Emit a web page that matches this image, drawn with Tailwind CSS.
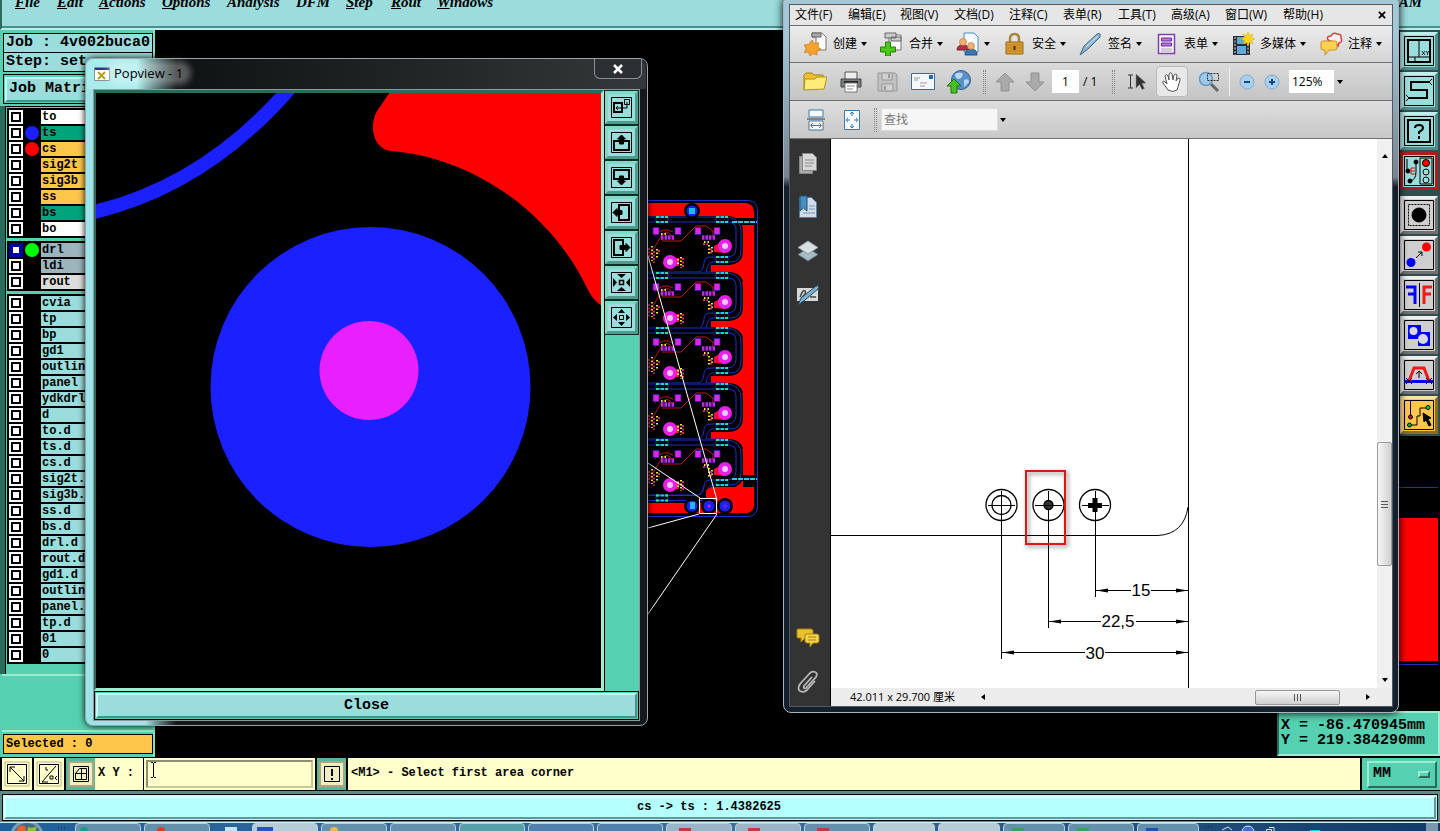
<!DOCTYPE html>
<html lang="zh">
<head>
    <meta charset="utf-8">
    <meta name="viewport" content="width=device-width, initial-scale=1" />
    <title>Graphic Editor</title>
    <script src="https://cdn.jsdelivr.net/npm/@tailwindcss/browser@4"></script>
</head>

<body class="bg-black font-['Liberation_Mono','Noto_Sans_CJK_SC',monospace] text-black">
<div class="relative min-h-screen flex flex-col overflow-hidden">

    <!-- menu bar -->
    <header class="h-[30px] shrink-0 bg-[#9bdcdc] border-l-2 border-l-[#2b6b5c] border-b-2 border-b-[#b5f0ec] shadow-[inset_0_-2px_0_#4f8c8c]">
        <nav class="-mt-[7px] flex items-start pl-[13px] pr-[18px] font-['Liberation_Serif',serif] font-bold italic text-[15px] leading-[18px]">
            <a href="#" class="w-[42px]"><u>F</u>ile</a>
            <a href="#" class="w-[42px]"><u>E</u>dit</a>
            <a href="#" class="w-[63px]"><u>A</u>ctions</a>
            <a href="#" class="w-[65px]"><u>O</u>ptions</a>
            <a href="#" class="w-[69px]">Analysis</a>
            <a href="#" class="w-[50px]">DFM</a>
            <a href="#" class="w-[45px]"><u>S</u>tep</a>
            <a href="#" class="w-[46px]"><u>R</u>out</a>
            <a href="#"><u>W</u>indows</a>
            <span class="ml-auto">AM</span>
        </nav>
    </header>

    <main class="flex-1 flex">
        <!-- layer list -->
        <aside class="w-[155px] shrink-0 flex flex-col bg-[#55d0b0] pl-[2px] font-bold border-r-2 border-r-[#7fe0c8]">
            <div class="pt-[3px] pl-px text-[15px] leading-[18px]">
                <div class="border border-black bg-[#9bdcdc] pl-[2px] h-5">Job : 4v002buca0</div>
                <div class="-mt-px border border-black bg-[#9bdcdc] pl-[2px] h-5">Step: set</div>
            </div>
            <div class="mt-[2px] ml-px border border-black p-px">
                <button class="w-full h-[25px] text-left pl-[2px] text-[15px] leading-5 bg-[#9bdcdc] border-2 border-t-[#c8f6f4] border-l-[#c8f6f4] border-b-[#4f8c8c] border-r-[#4f8c8c]">Job Matrix</button>
            </div>
            <div id="layers" class="mt-[2px] -ml-[2px] pl-[5px] bg-[#2b6b5c] text-[12px] leading-[14px]"></div>
            <div class="flex-1 min-h-[56px] border-t-2 border-t-[#9ceccf]"></div>
            <div class="border-t-2 border-t-[#9ceccf] pt-[2px] pb-[3px] pl-px">
                <div class="h-5 border border-black bg-[#ffc64c] pl-[2px] leading-[18px] text-[12px]">Selected : 0</div>
            </div>
        </aside>

        <!-- board canvas -->
        <section class="relative flex-1 bg-black flex flex-col items-end justify-between">
            <svg class="absolute top-0 right-0 w-[1285px] h-[727px]" viewBox="155 30 1285 727" fill="none">
                <defs>
                    <g id="pads">
                        <path d="M-6-2.500H6M-6 2.500H6" stroke="#28c8e8" stroke-width="2" stroke-dasharray="3.500 1" />
                        <path d="M-6-2V2M6-2V2" stroke="#1a30c8" />
                        <path d="M-6-2.500h2M4-2.500h2M-6 2.500h2M4 2.500h2" stroke="#28e878" stroke-width="2" />
                    </g>
                    <g id="cell">
                        <path d="M640 216H728Q743 217 743 232V250Q743 265 729 265H711V272H730Q743 274 743 282H640Z" fill="#000" />
                        <path d="M711 265H729Q738 265 743 257V281Q739 271 728 270H711Z" fill="#f00" />
                        <path d="M640 222H728Q736 222 736 230V248Q736 257 727 257H711Q704 257 704 263Q703 272 698 272H640" stroke="#1a30c8" />
                        <path d="M640 217H728Q741 219 741 231V250Q741 262 731 262H713Q708 262 706 272H727" stroke="#1a30c8" />
                        <path d="M650 255L660 238Q666 228 672 236M662 241H681L696 226H706L713 231V237M655 236Q663 226 673 232" stroke="#b81c10" />
                        <path d="M653 227.500h6v7h-6zM675 227.500h6v7h-6zM695 227.500h6v7h-6zM714 227.500h6v7h-6z" fill="#d828e8" stroke="#3018b8" stroke-width=".7" />
                        <path d="M661 237.500H674M702 237.500H715" stroke="#b828f0" stroke-width="4.500" stroke-dasharray="2.500 1" />
                        <path d="M725 240L714 246V252L725 253ZM670 258h9v8h-9z" fill="#e8103c" />
                        <path d="M709 245v10M712 247v6M681 257v11M678 259v7M652 246v15M657 249v10M704 242h6M661 234h7" stroke="#f0e828" stroke-width="2" stroke-dasharray="1.500 2" />
                        <path d="M711 248v6M683 258v9M649 248v14M654 251v12M659 250v4M703 244h5" stroke="#d02868" stroke-width="2" stroke-dasharray="2 1.500" />
                        <circle cx="670" cy="262" r="7" fill="#e820e8" /><circle cx="670" cy="262" r="3" fill="#f0c8ff" />
                        <circle cx="725" cy="246" r="7" fill="#e820e8" /><circle cx="725" cy="246" r="3" fill="#f0c8ff" />
                        <use href="#pads" x="662" y="219.500" /><use href="#pads" x="722" y="219.500" />
                        <use href="#pads" x="722" y="259.500" />
                    </g>
                </defs>
                <path d="M640 200.500H748Q757.500 201 757.500 211V507Q757 516 748 516.500H640" stroke="#1a30c8" />
                <path d="M640 203H746Q754 204 754 212V505Q753 513 745 513H640Z" fill="#f00" />
                <path d="M730 218H757V225H738ZM730 475H757V487H730Z" fill="#000" />
                <use href="#cell" />
                <use href="#cell" y="56" />
                <use href="#cell" y="111" />
                <use href="#cell" y="167" />
                <use href="#cell" y="223" />
                <path d="M640 495H700L711 487H754V505Q753 513 745 513H640Z" fill="#f00" />
                <path d="M640 495H700L706 490V503H640Z" fill="#000" />
                <path d="M640 495.500H697Q703 494 704 486M640 500.500H704" stroke="#1a30c8" />
                <use href="#pads" x="662" y="498" />
                <path d="M732 222H757M732 479H757" stroke="#28c8e8" stroke-width="2" stroke-dasharray="5 1" />
                <g fill="#000"><circle cx="692" cy="211" r="8" /><circle cx="692" cy="506" r="8" /><circle cx="709" cy="506" r="8" /><circle cx="725" cy="506" r="8" /></g>
                <g fill="#1a20f0"><circle cx="692" cy="211" r="5.500" /><circle cx="692" cy="506" r="5.500" /><circle cx="709" cy="506" r="5.500" /><circle cx="725" cy="506" r="5.500" /></g>
                <path d="M689 208h6v6h-6zM690 502h5v7h-5z" fill="#20b8ff" />
                <circle cx="709" cy="506" r="1.500" fill="#e020e8" />
                <path d="M722 506h6M725 503v6" stroke="#8020e8" />
                <path d="M699.500 498.500h17v15h-17zM648 256L717 500M648 463L700 498M648 528L699 514M648 614L717 514" stroke="#fff" />
                <path d="M1390 518H1438V661H1390Z" fill="#f00" />
                <path d="M1390 487.500H1438M1390 664.500H1438" stroke="#1a30c8" />
            </svg>

            <!-- tool column -->
            <div class="relative pt-[2px] pr-[2px] pb-[2px] bg-[#2f4f4f] flex flex-col gap-[2px]">
                <button aria-label="XY view" class="size-[38px] p-px bg-[#9bdcdc] border-[3px] border-t-[#c0f0ee] border-l-[#c0f0ee] border-b-[#4f8c8c] border-r-[#4f8c8c]">
                    <svg viewBox="0 0 30 30" fill="none" stroke="#000"><path d="M.5.500h29v29H.5z" /><path d="M4 4h22v22H4z" stroke-width="2" /><path d="M15 4v17M11 21v5M4 21h22" /><path d="M18 15l3 4m0-4l-3 4M22 15l1.500 2L25 15m-1.500 2v2" stroke-width=".8" /></svg>
                </button>
                <button aria-label="Snake" class="size-[38px] p-px bg-[#9bdcdc] border-[3px] border-t-[#c0f0ee] border-l-[#c0f0ee] border-b-[#4f8c8c] border-r-[#4f8c8c]">
                    <svg viewBox="0 0 30 30" fill="none" stroke="#000"><path d="M.5.500h29v29H.5z" /><path d="M25 6H7v8h16v8H4" stroke-width="2" /><path d="M28 3l-3 3 3 3M2 19l3 3-3 3" /></svg>
                </button>
                <button aria-label="Help" class="size-[38px] p-px bg-[#9bdcdc] border-[3px] border-t-[#c0f0ee] border-l-[#c0f0ee] border-b-[#4f8c8c] border-r-[#4f8c8c]">
                    <svg viewBox="0 0 30 30" fill="none" stroke="#000"><path d="M.5.500h29v29H.5z" /><path d="M4 4h22v22H4z" stroke-width="2" /><path d="M11 12q0-3 4-3t4 3q0 2-4 4v2M15 20v3" stroke-width="2" /></svg>
                </button>
                <button aria-label="Signals" class="size-[38px] p-px bg-[#9bdcdc] border-[3px] border-[#b01c1c] mb-[4px]">
                    <svg viewBox="0 0 30 30" fill="none" stroke="#000"><path d="M.5.500h29v29H.5zM16 2h12v26H16z" /><path d="M3 3v14M12 6v10q0 8-6 9" /><g fill="#000"><circle cx="4" cy="15" r="2" /><circle cx="12" cy="6" r="2" /><circle cx="6" cy="25" r="2" /></g><path d="M11 12H7v6h4M7 15h4" stroke="#d01010" /><circle cx="22" cy="7" r="3.500" fill="#f00" /><circle cx="22" cy="16" r="3" /><circle cx="22" cy="24" r="3" /></svg>
                </button>
                <button aria-label="Area select" class="size-[38px] p-px bg-[#cfcfcf] border-[3px] border-t-[#f0f0f0] border-l-[#f0f0f0] border-b-[#707070] border-r-[#707070]">
                    <svg viewBox="0 0 30 30" fill="none" stroke="#000"><path d="M.5.500h29v29H.5z" /><path d="M4.500 4.500h21v21h-21z" stroke-dasharray="2 1" /><circle cx="15" cy="15" r="7" fill="#000" /></svg>
                </button>
                <button aria-label="Measure" class="size-[38px] p-px bg-[#cfcfcf] border-[3px] border-t-[#f0f0f0] border-l-[#f0f0f0] border-b-[#707070] border-r-[#707070]">
                    <svg viewBox="0 0 30 30" fill="none" stroke="#000"><path d="M.5.500h29v29H.5z" /><path d="M12 18l6-6m-4 0h4v4" /><circle cx="22.500" cy="7" r="4.500" fill="#f00" stroke="none" /><circle cx="7" cy="22.500" r="4.500" fill="#00f" stroke="none" /></svg>
                </button>
                <button aria-label="Mirror" class="size-[38px] p-px bg-[#cfcfcf] border-[3px] border-t-[#f0f0f0] border-l-[#f0f0f0] border-b-[#707070] border-r-[#707070]">
                    <svg viewBox="0 0 30 30" fill="none" stroke="#000"><path d="M.5.500h29v29H.5zM15.500 3v24" /><path d="M2 7h9v17M4 14h7" stroke="#00f" stroke-width="3" /><path d="M28 7h-8v17M20 14h7" stroke="#f01818" stroke-width="3" /></svg>
                </button>
                <button aria-label="Merge shapes" class="size-[38px] p-px bg-[#cfcfcf] border-[3px] border-t-[#f0f0f0] border-l-[#f0f0f0] border-b-[#707070] border-r-[#707070]">
                    <svg viewBox="0 0 30 30" fill="none" stroke="#000"><path d="M.5.500h29v29H.5z" /><path d="M4 5h13v7h9v14H14v-7H4z" fill="#00f" stroke="none" /><circle cx="9.500" cy="11" r="4" fill="#d8d8e8" stroke="none" /><circle cx="19" cy="19" r="5" fill="#d8d8e8" stroke="none" /></svg>
                </button>
                <button aria-label="Profile" class="size-[38px] p-px bg-[#cfcfcf] border-[3px] border-t-[#f0f0f0] border-l-[#f0f0f0] border-b-[#707070] border-r-[#707070]">
                    <svg viewBox="0 0 30 30" fill="none" stroke="#000"><path d="M.5.500h29v29H.5z" /><path d="M1 21.500h28" stroke="#00f" stroke-width="3" /><path d="M5 21L10 8h10l5 13" stroke="#f01818" stroke-width="3" /><path d="M15 18v-6m-3 2l3-3 3 3M2 18l6 6m0-6l-6 6M22 18l6 6m0-6l-6 6" /></svg>
                </button>
                <button aria-label="Select net" class="size-[38px] p-px bg-[#ffc64c] border-[3px] border-t-[#ffe49c] border-l-[#ffe49c] border-b-[#8c6c28] border-r-[#8c6c28]">
                    <svg viewBox="0 0 30 30" fill="none" stroke="#000"><path d="M.5.500h29v29H.5zM6.500 1v17M7 25h6V16h3V8h7" /><circle cx="6.500" cy="17" r="2" fill="#c01818" /><circle cx="5.500" cy="25" r="2" fill="#10c010" /><circle cx="24" cy="7.500" r="2" fill="#10e010" /><path d="M19 13l8 5-3 1 3 6-2 1-3-6-2 2z" fill="#000" /></svg>
                </button>
            </div>

            <div class="relative mb-px bg-[#55d0b0] border-2 border-t-[#9ceccf] border-l-[#2b6b5c] border-b-[#9ceccf] border-r-[#9ceccf] pl-[2px] pr-[13px] pt-[5px] h-[45px] text-[15px] leading-[15px] font-bold">
                <div>X = -86.470945mm</div>
                <div>Y = 219.384290mm</div>
            </div>
        </section>
    </main>

    <!-- command line -->
    <form class="h-[34px] shrink-0 flex gap-[2px] bg-black pt-px pb-px pl-[2px] font-bold text-[12px]">
        <button type="button" aria-label="Diagonal" class="w-[30px] bg-[#ffffcc] flex items-center justify-center">
            <svg class="size-[26px]" viewBox="0 0 26 26" fill="none" stroke="#000"><path d="M1 1h24v24H1z" stroke="#b8b48c" /><path d="M3.500 3.500h19v19h-19zM6 6l14 14M6 11V6h5M20 15v5h-5" /></svg>
        </button>
        <button type="button" aria-label="Angle" class="w-[30px] bg-[#ffffcc] flex items-center justify-center">
            <svg class="size-[26px]" viewBox="0 0 26 26" fill="none" stroke="#000"><path d="M1 1h24v24H1z" stroke="#b8b48c" /><path d="M3.500 3.500h19v19h-19zM6 21L20 5M6 21h6M10 6v3h2M14 15h3v3h-3zM21 15l-2 2 2 2" /></svg>
        </button>
        <button type="button" aria-label="Grid" class="w-[29px] bg-[#55b89c] flex items-center justify-center">
            <svg class="size-[26px]" viewBox="0 0 26 26" fill="none" stroke="#000"><path d="M1 1h24v24H1z" fill="#efeec0" stroke="#a8a880" stroke-width="2" /><path d="M5.500 5.500h15v15h-15zM7.500 12.500l4-5h7v11h-11zM13.500 7v12M7 12.500h12" /></svg>
        </button>
        <label for="xy" class="w-[48px] -ml-[2px] bg-[#ffffcc] pl-[3px] leading-[31px] whitespace-pre">X Y :</label>
        <div class="relative w-[171px] -ml-px bg-[#ffffcc] p-[2px] flex">
            <input id="xy" type="text" class="w-full border-2 border-t-[#8c8c70] border-l-[#8c8c70] border-b-[#c8c8a0] border-r-[#c8c8a0] bg-[#ffffcc] px-1 outline-none" />
            <svg class="absolute left-[6px] top-[4px] w-[7px] h-[16px]" viewBox="0 0 7 16" fill="none" stroke="#000"><path d="M1 .500h2M4 .500h2M3.500 1v14M1 15.500h2M4 15.500h2" /></svg>
        </div>
        <button type="button" aria-label="Warnings" class="w-[29px] bg-[#55b89c] flex items-center justify-center">
            <svg class="size-[26px]" viewBox="0 0 26 26" fill="none" stroke="#000"><path d="M1 1h24v24H1z" fill="#efeec0" stroke="#a8a880" stroke-width="2" /><path d="M5.500 5.500h15v15h-15z" /><path d="M13 8v7M13 17v2" stroke-width="2" /></svg>
        </button>
        <output class="flex-1 bg-[#ffffcc] pl-[3px] leading-[31px]">&lt;M1&gt; - Select first area corner</output>
        <div class="w-[78px] bg-[#55d0b0] pt-[3px] pb-[2px] pl-[5px] pr-[3px] flex">
            <button type="button" class="flex-1 flex items-center justify-between pl-1 pr-[5px] border-2 border-t-[#9ceccf] border-l-[#9ceccf] border-b-[#2b6b5c] border-r-[#2b6b5c] text-[15px]">MM<span class="w-3 h-[7px] border-2 border-t-[#9ceccf] border-l-[#9ceccf] border-b-[#2b6b5c] border-r-[#2b6b5c]"></span></button>
        </div>
    </form>

    <footer class="h-[31px] shrink-0 bg-[#5f8a88] px-[2px] pt-[3px] pb-px">
        <div class="h-[27px] border border-black bg-[#b5ffff] p-px">
            <div class="h-full pr-[22px] border-2 border-t-[#dcffff] border-l-[#dcffff] border-b-[#5f9a9a] border-r-[#5f9a9a] text-center font-bold text-[12px] leading-[18px]">cs -&gt; ts : 1.4382625</div>
        </div>
    </footer>

    <!-- desktop task bar -->
    <div class="h-[9px] shrink-0 overflow-hidden bg-linear-to-r from-[#1f5f98] via-[#3e6f98] to-[#123a68] border-t border-t-[#c8f0ff] flex items-start gap-[3px] pr-[2px]">
        <svg class="w-[72px] h-8 shrink-0" viewBox="0 0 72 32"><circle cx="27" cy="14" r="17" fill="#7da0b8" /><circle cx="27" cy="14" r="14" fill="#476884" /><path d="M18 4q4-3 8 0l-1 6h-9z" fill="#e8602c" /><path d="M28 4q4 2 9-1l-2 7h-8z" fill="#8cc43c" /><path d="M58 5h1m2 0h1m2 0h1" stroke="#0a2038" /></svg>
        <div class="w-[66px] h-8 rounded-t border border-[#b8d0e0] bg-[#6590ac] pl-1"><i class="block size-2 rounded-full bg-[#1c9c88] mt-[3px]"></i></div>
        <div class="w-[66px] h-8 rounded-t border border-[#b8d0e0] bg-[#6590ac] pl-3"><i class="block size-2 rounded-full bg-[#d83c2c] mt-[3px]"></i></div>
        <div class="w-[36px] h-8 pl-3"><i class="block w-3 h-2 bg-[#c8e4f4] mt-1"></i></div>
        <div class="w-[66px] h-8 rounded-t border border-[#b8d0e0] bg-[#b8ccd8] pl-1"><i class="block w-4 h-2 bg-[#2850c0] mt-[3px]"></i></div>
        <div class="w-[66px] h-8 rounded-t border border-[#b8d0e0] bg-[#6590ac] pl-2"><i class="block size-2 rounded-full bg-[#f0b850] mt-[3px]"></i></div>
        <div class="w-[66px] h-8 rounded-t border border-[#b8d0e0] bg-[#6590ac]"></div>
        <div class="w-[66px] h-8 rounded-t border border-[#b8d0e0] bg-[#58a0a8]"></div>
        <div class="w-[66px] h-8 rounded-t border border-[#b8d0e0] bg-[#5080ac]"></div>
        <div class="w-[66px] h-8 rounded-t border border-[#b8d0e0] bg-[#5080ac]"></div>
        <div class="w-[66px] h-8 rounded-t border border-[#b8d0e0] bg-[#9cb4c8] pl-3"><i class="block w-3 h-2 bg-[#c03848] mt-1"></i></div>
        <div class="w-[66px] h-8 rounded-t border border-[#b8d0e0] bg-[#9cb4c8] pl-3"><i class="block w-3 h-2 bg-[#c03848] mt-1"></i></div>
        <div class="w-[66px] h-8 rounded-t border border-[#b8d0e0] bg-[#6590ac] pl-3"><i class="block w-3 h-2 bg-[#c03848] mt-1"></i></div>
        <div class="w-[62px] h-8 rounded-t border border-[#b8d0e0] bg-[#b8ccd8]"></div>
        <div class="w-[62px] h-8 rounded-t border border-[#b8d0e0] bg-[#b8ccd8]"></div>
        <div class="w-[62px] h-8 rounded-t border border-[#b8d0e0] bg-[#6590ac] pl-2"><i class="block w-3 h-2 bg-[#38a058] mt-1"></i></div>
        <div class="w-[66px] h-8 rounded-t border border-[#b8d0e0] bg-[#6590ac] pl-2"><i class="block w-3 h-2 bg-[#38a058] mt-1"></i></div>
        <div class="w-[62px] h-8 rounded-t border border-[#b8d0e0] bg-[#6590ac] pl-2"><i class="block w-3 h-2 bg-[#2050b0] mt-1"></i></div>
        <svg class="w-[130px] h-[9px]" viewBox="0 0 130 9" fill="none" stroke="#dce8f4"><path d="M3 4h1m2 0h1m2 0h1" stroke="#0a2038" /><path d="M20 7l6-3 4 3" /><circle cx="46" cy="9" r="6" fill="#4868c8" /><path d="M64.500 6.500h5v5h-5zM67 4.500h5v4" /><path d="M108 8h10" stroke="#28c8e8" stroke-width="2" /></svg>
        <div class="ml-auto w-3 h-8 bg-[#7c98ac]"></div>
    </div>

    <!-- Popview window -->
    <div class="absolute left-[85px] top-[58px] w-[563px] h-[668px] rounded-lg border border-[#9aa4a8] bg-linear-to-r from-[#9ce4e8] from-[60px] to-[#16191b] to-[90px] px-[7px] pb-[6px] flex flex-col shadow-[0_0_6px_#000]">
        <div class="h-[30px] shrink-0 flex bg-linear-to-r from-[#a8ecec] from-[50px] via-[#101314] via-[90px] to-[#34383a] -mx-[6px] px-[6px] rounded-t-lg">
            <svg class="mt-[7px] ml-px size-4" viewBox="0 0 16 16" fill="none"><path d="M.5 1.500h15v13H.5z" fill="#fff" stroke="#8c8c9c" /><path d="M1 2h14v2H1z" fill="#203880" /><path d="M4 6l7 7M11 6l-7 7" stroke="#b0a018" stroke-width="2" /></svg>
            <div class="mt-[6px] px-1 h-4 text-[13px] leading-4 font-['Open_Sans',sans-serif] bg-white/30 rounded-full shadow-[0_0_6px_4px_#ffffff4d]">Popview - 1</div>
            <button aria-label="Close window" class="ml-auto -mr-[2px] w-[48px] h-[20px] border border-t-0 border-[#8c9094] rounded-b-md bg-[#2c3032] flex items-center justify-center"><svg class="size-[10px]" viewBox="0 0 10 10" stroke="#fff" stroke-width="2.500"><path d="M1 1l8 8M9 1l-8 8" /></svg></button>
        </div>
        <div class="flex-1 flex flex-col border border-[#8c9a9a] bg-[#55d0b0]">
            <div class="flex-1 flex">
                <div class="flex-1 border-t-[3px] border-l-[2px] border-t-[#2b6b5c] border-l-[#2b6b5c] border-b-[3px] border-b-[#9ceccf] border-r-[3px] border-r-[#9ceccf] bg-black overflow-hidden">
                    <svg class="w-[506px] h-[595px]" viewBox="96 92 506 595" fill="none">
                        <path d="M90 212Q204 186 290 87" stroke="#1a20ff" stroke-width="14" />
                        <path d="M390 91L377 110C369 124 372 148 392 150C480 158 553 217 586 285Q594 302 603 305V91Z" fill="#f00" />
                        <circle cx="370.500" cy="386" r="160" fill="#1a20ff" />
                        <circle cx="369" cy="369.500" r="49.500" fill="#e820ff" />
                    </svg>
                </div>
                <div class="w-[35px] border-l border-black pt-px flex flex-col gap-[2px] bg-linear-to-b from-[#0a3028] from-[245px] to-[#55d0b0] to-[245px]">
                    <button aria-label="Zoom window" class="size-[33px] p-[3px] bg-[#9bdcdc] border-[3px] border-t-[#7fdcc4] border-l-[#7fdcc4] border-b-[#4f9c8c] border-r-[#4f9c8c]"><svg viewBox="0 0 21 21" fill="none" stroke="#000"><path d="M.5.500h20v20H.5z" /><path d="M3 6h8v9H3z" stroke-width="2" /><path d="M13.500 2.500h5v5h-5zM16 5v6H5m2-2l-2 2 2 2" /></svg></button>
                    <button aria-label="Pan up" class="size-[33px] p-[3px] bg-[#9bdcdc] border-[3px] border-t-[#7fdcc4] border-l-[#7fdcc4] border-b-[#4f9c8c] border-r-[#4f9c8c]"><svg viewBox="0 0 21 21" fill="none" stroke="#000"><path d="M.5.500h20v20H.5z" /><path d="M8 9H3v9h15V9h-5" stroke-width="2" /><path d="M10.500 3l4 4h-2v5h-4V7h-2z" fill="#000" /></svg></button>
                    <button aria-label="Pan down" class="size-[33px] p-[3px] bg-[#9bdcdc] border-[3px] border-t-[#7fdcc4] border-l-[#7fdcc4] border-b-[#4f9c8c] border-r-[#4f9c8c]"><svg viewBox="0 0 21 21" fill="none" stroke="#000"><path d="M.5.500h20v20H.5z" /><path d="M8 12H3V3h15v9h-5" stroke-width="2" /><path d="M10.500 18l4-4h-2V9h-4v5h-2z" fill="#000" /></svg></button>
                    <button aria-label="Pan left" class="size-[33px] p-[3px] bg-[#9bdcdc] border-[3px] border-t-[#7fdcc4] border-l-[#7fdcc4] border-b-[#4f9c8c] border-r-[#4f9c8c]"><svg viewBox="0 0 21 21" fill="none" stroke="#000"><path d="M.5.500h20v20H.5z" /><path d="M8 8V3h10v15H8v-5" stroke-width="2" /><path d="M2 10.500l4-4v2h5v4H6v2z" fill="#000" /></svg></button>
                    <button aria-label="Pan right" class="size-[33px] p-[3px] bg-[#9bdcdc] border-[3px] border-t-[#7fdcc4] border-l-[#7fdcc4] border-b-[#4f9c8c] border-r-[#4f9c8c]"><svg viewBox="0 0 21 21" fill="none" stroke="#000"><path d="M.5.500h20v20H.5z" /><path d="M12 8V3H3v15h9v-5" stroke-width="2" /><path d="M19 10.500l-4-4v2H9v4h6v2z" fill="#000" /></svg></button>
                    <button aria-label="Zoom in" class="size-[33px] p-[3px] bg-[#9bdcdc] border-[3px] border-t-[#7fdcc4] border-l-[#7fdcc4] border-b-[#4f9c8c] border-r-[#4f9c8c]"><svg viewBox="0 0 21 21" fill="none" stroke="#000"><path d="M.5.500h20v20H.5z" /><path d="M8.500 8.500h4v4h-4z" stroke-width="1.500" /><path d="M6 2h9l-4.500 4zM6 19h9l-4.500-4zM2 6v9l4-4.500zM19 6v9l-4-4.500z" fill="#000" stroke="none" /></svg></button>
                    <button aria-label="Zoom out" class="size-[33px] p-[3px] bg-[#9bdcdc] border-[3px] border-t-[#7fdcc4] border-l-[#7fdcc4] border-b-[#4f9c8c] border-r-[#4f9c8c]"><svg viewBox="0 0 21 21" fill="none" stroke="#000"><path d="M.5.500h20v20H.5z" /><path d="M8.500 8.500h4v4h-4z" /><path d="M7 6h7l-3.500-4zM7 15h7l-3.500 4zM6 7v7l-4-3.500zM15 7v7l4-3.500z" fill="#000" stroke="none" /></svg></button>
                </div>
            </div>
            <div class="border border-black p-px">
                <button class="w-full h-[25px] bg-[#9bdcdc] border-2 border-t-[#c8f6f4] border-l-[#c8f6f4] border-b-[#4f8c8c] border-r-[#4f8c8c] font-bold text-[15px] leading-[21px]">Close</button>
            </div>
        </div>
    </div>

    <!-- PDF reader window -->
    <div class="absolute left-[783px] -top-1 w-[616px] h-[717px] rounded-lg border border-[#a8b4bc] bg-linear-to-b from-[#a4c8d8] from-[36px] via-[#788490] via-[180px] to-[#14202c] to-[190px] p-[5px] pt-[7px] flex flex-col shadow-[0_0_8px_#000] font-['Open_Sans','Noto_Sans_CJK_SC',sans-serif] text-[12px]">
        <div class="flex-1 flex flex-col min-h-0 border border-[#505860] bg-[#e4e4e4]">
            <nav class="h-[21px] shrink-0 flex items-center pl-[5px] pr-[6px] bg-[#e6e6e6] border-b border-[#707070] leading-4">
                <a href="#" class="w-[53px]">文件(F)</a>
                <a href="#" class="w-[52px]">编辑(E)</a>
                <a href="#" class="w-[54px]">视图(V)</a>
                <a href="#" class="w-[55px]">文档(D)</a>
                <a href="#" class="w-[54px]">注释(C)</a>
                <a href="#" class="w-[55px]">表单(R)</a>
                <a href="#" class="w-[53px]">工具(T)</a>
                <a href="#" class="w-[54px]">高级(A)</a>
                <a href="#" class="w-[58px]">窗口(W)</a>
                <a href="#">帮助(H)</a>
                <button aria-label="Close document" class="ml-auto"><svg class="size-[8px]" viewBox="0 0 9 9" stroke="#000" stroke-width="2"><path d="M1 1l7 7M8 1l-7 7" /></svg></button>
            </nav>

            <div class="h-[37px] shrink-0 flex items-center gap-[13px] pl-[14px] bg-linear-to-b from-[#ececec] to-[#d4d4d4] border-b border-[#707070] bg-[#ddd]">
                <button class="flex items-center gap-[5px]"><svg class="size-6" viewBox="0 0 24 24"><path d="M8 1h10l4 4v13H12V5H8z" fill="#fafafa" stroke="#777" /><path d="M8 1h9v4H8z" fill="#aaa" stroke="#666" /><path d="M8 8l2.500 4 4-1.500-.5 4.500 3 2-4 2v4l-4-1.500L6 24l-1.500-4-4 .5L2 16.500 0 13l4.500-.5z" fill="#f5a32c" stroke="#c87818" stroke-width=".7" /></svg>创建<svg class="w-[6px] h-1 -ml-px" viewBox="0 0 6 4"><path d="M0 0h6L3 4z" /></svg></button>
                <button class="flex items-center gap-[5px]"><svg class="size-6" viewBox="0 0 24 24"><path d="M9 3h12v15H9z" fill="#fafafa" stroke="#777" /><path d="M5 1h11v5H5zM11 5h10v4H11z" fill="#ccc" stroke="#666" /><path d="M5.500 10h5v5h5v5h-5v4h-5v-4H.5v-5h5z" fill="#48c818" stroke="#28800c" /></svg>合并<svg class="w-[6px] h-1 -ml-px" viewBox="0 0 6 4"><path d="M0 0h6L3 4z" /></svg></button>
                <button aria-label="Collaborate" class="flex items-center gap-[5px]"><svg class="size-6" viewBox="0 0 24 24"><path d="M8 1h10l4 4v15H8z" fill="#f4faff" stroke="#4888c0" /><path d="M1 18q0-5 6-5t6 5z" fill="#b03048" stroke="#802038" /><circle cx="7" cy="10" r="3.500" fill="#f0b078" stroke="#b07038" stroke-width=".6" /><path d="M9 23q0-6 6-6t6 6z" fill="#3878b0" stroke="#205080" /><circle cx="15" cy="14" r="3.500" fill="#f0b078" stroke="#b07038" stroke-width=".6" /></svg><svg class="w-[6px] h-1 -ml-px" viewBox="0 0 6 4"><path d="M0 0h6L3 4z" /></svg></button>
                <button class="flex items-center gap-[5px]"><svg class="size-6" viewBox="0 0 24 24"><path d="M7 11V7q0-5 4.500-5T16 7v4" fill="none" stroke="#a88838" stroke-width="2.500" /><path d="M3 10h17v12H3z" fill="#d89c30" stroke="#98681c" /><path d="M4 13h15M4 16h15M4 19h15" stroke="#b87c20" /><path d="M11.500 14v4" stroke="#503008" stroke-width="2" /></svg>安全<svg class="w-[6px] h-1 -ml-px" viewBox="0 0 6 4"><path d="M0 0h6L3 4z" /></svg></button>
                <button class="flex items-center gap-[5px]"><svg class="size-6" viewBox="0 0 24 24"><path d="M1 23L5 14 18 2q4-2 3 3L9 17z" fill="#88b4d0" stroke="#40688c" /><path d="M7 15L19 4" stroke="#d8ecf8" /></svg>签名<svg class="w-[6px] h-1 -ml-px" viewBox="0 0 6 4"><path d="M0 0h6L3 4z" /></svg></button>
                <button class="flex items-center gap-[5px]"><svg class="size-6" viewBox="0 0 24 24"><path d="M3.500 2.500h16v19h-16z" fill="#faf4ff" stroke="#8040a8" stroke-width="1.500" /><path d="M6.500 6h10v3h-10zM6.500 11h10v3h-10z" fill="#b878d8" stroke="#6c2c98" /><path d="M6 17h11M6 19h11" stroke="#aaa" /></svg>表单<svg class="w-[6px] h-1 -ml-px" viewBox="0 0 6 4"><path d="M0 0h6L3 4z" /></svg></button>
                <button class="flex items-center gap-[5px]"><svg class="size-6" viewBox="0 0 24 24"><path d="M2 4h17v19H2z" fill="#282c30" /><path d="M6 5h9v7H6zM6 14h9v8H6z" fill="#60a8d8" /><path d="M4 5v18M17 5v18" stroke="#ddd" stroke-dasharray="2 1.500" /><path d="M17 0l1.500 3.500L22 2l-1.500 3.500L24 7l-3.500 1.500L22 12l-3.500-1.500L17 14l-1.500-3.500L12 12l1.500-3.500L10 7l3.500-1.500L12 2l3.500 1.500z" fill="#f8d420" stroke="#d8a010" stroke-width=".4" /></svg>多媒体<svg class="w-[6px] h-1 -ml-px" viewBox="0 0 6 4"><path d="M0 0h6L3 4z" /></svg></button>
                <button class="flex items-center gap-[5px]"><svg class="size-6" viewBox="0 0 24 24"><path d="M9 8q-2-4 3-4 2-4 6-2 5 0 4 4 2 4-2 5l-1 3-3-3z" fill="#fdf0f0" stroke="#d04040" stroke-width="1.500" /><path d="M4 9h12q2 0 2 2v5q0 2-2 2h-6l-4 5v-5H4q-2 0-2-2v-5q0-2 2-2z" fill="#fcd050" stroke="#c89020" /></svg>注释<svg class="w-[6px] h-1 -ml-px" viewBox="0 0 6 4"><path d="M0 0h6L3 4z" /></svg></button>
            </div>

            <div class="h-[38px] shrink-0 flex items-center pl-[13px] bg-linear-to-b from-[#dadada] to-[#c4c4c4] border-b border-[#707070]">
                <div class="flex gap-3">
                    <button aria-label="Open"><svg class="block w-6 h-6" viewBox="0 0 24 24"><path d="M1 20V5l2-2h6l2 2h9v4" fill="#f0c030" stroke="#a88010" /><path d="M1 20L2 9h10l2-2h10l-3 12z" fill="#fcec78" stroke="#b89018" /></svg></button>
                    <button aria-label="Print"><svg class="block w-6 h-6" viewBox="0 0 24 24"><path d="M6 2h12v8H6z" fill="#eee" stroke="#555" /><path d="M2 9h20v8H2z" fill="#787c80" stroke="#404448" /><path d="M5 12h14" stroke="#222" stroke-width="2" /><path d="M6 13h12v9H6z" fill="#fff" stroke="#777" /><path d="M8 16h8M8 19h6" stroke="#888" /></svg></button>
                    <button aria-label="Save"><svg class="block w-6 h-6" viewBox="0 0 24 24" fill="#c0c0c0" stroke="#999"><path d="M3 3h17l2 2v16H3z" /><path d="M7 3h10v7H7zM7 14h11v7H7z" fill="#d0d0d0" /><path d="M10 16v4M14 4v4" stroke-width="2" /></svg></button>
                    <button aria-label="Email"><svg class="block w-6 h-6" viewBox="0 0 24 24"><path d="M.5 3.500h23v16H.5z" fill="#f4f8fc" stroke="#3c6c94" /><path d="M18 5h4v4h-4z" fill="#2868b0" /><path d="M3 8h6M3 10h4M9 13h7M9 16h5" stroke="#999" /></svg></button>
                    <button aria-label="Upload"><svg class="block w-6 h-6" viewBox="0 0 24 24"><circle cx="14" cy="10" r="9.500" fill="#5890c8" stroke="#305c90" /><path d="M8 4q5-3 8 0-1 5-5 5-3-1-3-5zM17 10q5-2 5 2l-5 5z" fill="#b8d8f0" /><path d="M7 9l7 7h-4v7H4v-7H0z" fill="#48c020" stroke="#287010" /></svg></button>
                </div>
                <i class="ml-3 mr-2 h-6 w-[3px] border-x border-dotted border-[#888]"></i>
                <button aria-label="Previous page"><svg class="block size-[22px]" viewBox="0 0 22 22"><path d="M11 2l9 9h-5v9H7v-9H2z" fill="#aaa" stroke="#929292" /></svg></button>
                <button aria-label="Next page" class="ml-2"><svg class="block size-[22px]" viewBox="0 0 22 22"><path d="M11 20l9-9h-5V2H7v9H2z" fill="#aaa" stroke="#929292" /></svg></button>
                <input aria-label="Page number" value="1" class="ml-[6px] w-[27px] h-[23px] bg-white text-center" />
                <span class="ml-1 w-[29px] whitespace-nowrap">/ 1</span>
                <i class="h-6 w-[3px] border-x border-dotted border-[#888]"></i>
                <button aria-label="Select tool" class="ml-3"><svg class="block w-5 h-5" viewBox="0 0 20 20"><path d="M1 3h5M1 16h5M3.500 3v13" stroke="#333" /><path d="M9 2l10 9-4 .5 2.500 5-2.500 1-2.500-5L9 16z" fill="#333" stroke="#888" stroke-width=".5" /></svg></button>
                <button aria-label="Hand tool" class="ml-[9px] w-[32px] h-[31px] bg-[#e8e8e8] border border-[#bbb] rounded-sm flex items-center justify-center"><svg class="size-[22px]" viewBox="0 0 22 22"><path d="M7 19L2 12q-1-3 2-1l2 2L4 5q1-3 3 0l1 4V3q2-3 3 0l1 6 1-5q2-2 3 0l-1 6 2-3q3 0 2 2l-3 10q-4 3-9 0z" fill="#fff" stroke="#555" /></svg></button>
                <button aria-label="Marquee zoom" class="ml-[10px]"><svg class="block size-[22px]" viewBox="0 0 22 22" fill="none"><path d="M13 13l7 7" stroke="#666" stroke-width="3" /><circle cx="8" cy="8" r="6.500" fill="#a0c8e8" stroke="#6898c0" stroke-width="1.500" /><path d="M9.500 2.500h11v7h-11z" stroke="#333" stroke-dasharray="2 1" /></svg></button>
                <i class="mx-[9px] h-7 w-px bg-[#eee]"></i>
                <button aria-label="Zoom out"><svg class="block size-4" viewBox="0 0 16 16"><circle cx="8" cy="8" r="7" fill="#a8d0f0" stroke="#88a8c0" /><path d="M5 8h6" stroke="#184878" stroke-width="2" /></svg></button>
                <button aria-label="Zoom in" class="ml-[9px]"><svg class="block size-4" viewBox="0 0 16 16"><circle cx="8" cy="8" r="7" fill="#a8d0f0" stroke="#88a8c0" /><path d="M5 8h6M8 5v6" stroke="#184878" stroke-width="2" /></svg></button>
                <input aria-label="Zoom" value="125%" class="ml-[9px] w-[45px] h-[23px] bg-white pl-[3px]" />
                <svg class="ml-[3px] w-[6px] h-1" viewBox="0 0 6 4"><path d="M0 0h6L3 4z" /></svg>
            </div>

            <div class="h-[38px] shrink-0 flex items-center pl-[14px] bg-linear-to-b from-[#dedede] to-[#c8c8c8] border-b border-[#707070]">
                <button aria-label="Fit width"><svg class="block size-6" viewBox="0 0 24 24" fill="#f4faff" stroke="#3c78a8"><path d="M5 2h14v7H5zM5 13h14v9H5z" /><path d="M3 11h18" stroke="#333" /><path d="M7 17.500h10M9 15l-2.500 2.500L9 20M15 15l2.500 2.500L15 20" fill="none" /></svg></button>
                <button aria-label="Fit page" class="ml-3"><svg class="block size-6" viewBox="0 0 24 24" fill="none" stroke="#3c78a8"><path d="M4.500 2.500h15v19h-15z" fill="#f4faff" /><path d="M12 4v4M10 6l2-2 2 2M12 16v4M10 18l2 2 2-2M6 12h4M8 10l-2 2 2 2M14 12h4M16 10l2 2-2 2" /></svg></button>
                <i class="ml-[10px] mr-[4px] h-6 w-[3px] border-x border-dotted border-[#888]"></i>
                <input aria-label="Find" placeholder="查找" class="w-[117px] h-[23px] bg-[#f6f6f6] border border-[#ddd] pl-[2px] placeholder:text-[#777]" />
                <svg class="ml-[2px] w-[6px] h-1" viewBox="0 0 6 4"><path d="M0 0h6L3 4z" /></svg>
            </div>

            <div class="flex-1 min-h-0 flex">
                <div class="w-[41px] bg-[#333] flex flex-col items-center pt-3 pb-3 pr-[5px] gap-5 border-r border-black">
                    <svg class="size-6" viewBox="0 0 24 24" stroke="#888"><path d="M3.500 5.500h13v17h-13z" fill="#aaa" /><path d="M6.500 2.500h10l4 4v13h-14z" fill="#d8d8d8" /><path d="M9 9h9M9 12h9M9 15h7" /></svg>
                    <svg class="size-6" viewBox="0 0 24 24"><path d="M3.500 2.500h12l5 5v15h-17z" fill="#d0dce8" stroke="#5080a8" /><path d="M4 1h7v15l-3.500-3L4 16z" fill="#4890c0" stroke="#205078" /><path d="M13 11h6M13 14h6M7 18h12" stroke="#7898b0" /></svg>
                    <svg class="size-6" viewBox="0 0 24 24"><path d="M12 9l10 6.500L12 22 2 15.500z" fill="#a8bcc8" stroke="#60707c" /><path d="M12 2l10 6.500L12 15 2 8.500z" fill="#d8e0e4" stroke="#8898a0" /></svg>
                    <svg class="size-6" viewBox="0 0 24 24"><path d="M1 5h21v13H1z" fill="#d8d8d8" /><path d="M4 14q3-8 5-6t-3 6q5-3 6-1M14 14h6" fill="none" stroke="#444" stroke-width="1.500" /><path d="M2 22L5 15 20 3q4-1 2 3L9 17z" fill="#78b0d0" stroke="#284860" /></svg>
                    <svg class="size-6 mt-auto" viewBox="0 0 24 24"><path d="M2 3h13q2 0 2 2v5q0 2-2 2H9l-4 4v-4H2q-1 0-1-1V4q0-1 1-1z" fill="#e8c030" stroke="#a88010" /><path d="M11 8h10q2 0 2 2v5q0 2-2 2h-4l-3 4v-4h-3q-2 0-2-2v-5q0-2 2-2z" fill="#f4d448" stroke="#a88010" /><path d="M12 11h8M12 14h8" stroke="#a88010" /></svg>
                    <svg class="size-6" viewBox="0 0 24 24" fill="none" stroke="#b8b8b8" stroke-width="1.800"><path d="M16 7L8 16q-1 3 2 2l10-11q2-4-1-5-3-1-5 1L4 14q-3 5 0 7 4 2 7-1l8-9" /></svg>
                </div>
                <div class="flex-1 min-w-0 flex flex-col">
                    <div class="flex-1 min-h-0 flex">
                        <div class="flex-1 bg-white overflow-hidden">
                            <svg class="w-[545px] h-[549px]" viewBox="831 139 545 549" fill="none" stroke="#000" font-family="Liberation Sans, sans-serif" font-size="17" text-anchor="middle">
                                <defs><filter id="sh" x="-30%" y="-30%" width="170%" height="170%"><feDropShadow dx="2" dy="2" stdDeviation="2" flood-opacity=".5" /></filter></defs>
                                <path d="M1188.500 139V688M831 535.500H1158Q1184 534 1188 507M1001.500 491V659M1048.500 491V628M1095.500 491V597" />
                                <g stroke-width="1.300"><circle cx="1001.500" cy="505" r="15.500" /><circle cx="1001.500" cy="505" r="9.500" /><circle cx="1048.500" cy="505" r="15.500" /><circle cx="1048.500" cy="505" r="4.500" fill="#333" /><circle cx="1095" cy="505" r="15.500" /></g>
                                <path d="M988 505.500h27M1035 505.500h27M1082 505.500h27" />
                                <path d="M1095 498v14M1088 505.500h14" stroke-width="5" />
                                <path d="M1096 590.500H1131M1151 590.500H1188M1049 621.500H1101M1136 621.500H1188M1002 652.500H1085M1105 652.500H1188" />
                                <path d="M1096 590.500l12-2v4zM1188 590.500l-12-2v4zM1049 621.500l12-2v4zM1188 621.500l-12-2v4zM1002 652.500l12-2v4zM1188 652.500l-12-2v4z" fill="#000" stroke="none" />
                                <g fill="#000" stroke="none"><text x="1141" y="596">15</text><text x="1118" y="627">22,5</text><text x="1095" y="659">30</text></g>
                                <rect x="1026" y="471" width="39" height="73" stroke="#e01818" stroke-width="2" filter="url(#sh)" />
                            </svg>
                        </div>
                        <div class="w-[15px] bg-[#f0f0f0] flex flex-col items-center pt-[15px] pb-[6px]">
                            <svg class="w-[6px] h-1 shrink-0" viewBox="0 0 6 4"><path d="M0 4h6L3 0z" /></svg>
                            <div class="mt-auto w-full h-[124px] border border-[#999] rounded-xs bg-linear-to-r from-[#f6f6f6] to-[#d0d0d0] flex items-center justify-center"><i class="w-[7px] h-[7px] border-y border-[#555] flex items-center"><i class="h-px w-full bg-[#555]"></i></i></div>
                            <svg class="mt-[112px] w-[6px] h-1 shrink-0" viewBox="0 0 6 4"><path d="M0 0h6L3 4z" /></svg>
                        </div>
                    </div>
                    <div class="h-[18px] flex items-center bg-[#ececec] pl-[19px] pr-[22px]">
                        <span class="w-[131px] whitespace-nowrap leading-4 text-[11px]">42.011 x 29.700 厘米</span>
                        <svg class="w-1 h-[6px]" viewBox="0 0 4 6"><path d="M4 0v6L0 3z" /></svg>
                        <div class="ml-auto w-[85px] h-[15px] border border-[#999] rounded-xs bg-linear-to-b from-[#f6f6f6] to-[#d0d0d0] flex items-center justify-center"><i class="w-[7px] h-[7px] border-x border-[#555] flex justify-center"><i class="w-px h-full bg-[#555]"></i></i></div>
                        <svg class="ml-[26px] w-1 h-[6px]" viewBox="0 0 4 6"><path d="M0 0v6l4-3z" /></svg>
                    </div>
                </div>
            </div>
        </div>
    </div>
</div>

<script>
    // layer name, row colour, optional display colour
    const groups = [
        [['to', '#ffffff'], ['ts', '#00a47c', '#1a20ff'], ['cs', '#ffc64c', '#ff0000'], ['sig2t', '#ffc64c'], ['sig3b', '#ffc64c'], ['ss', '#ffc64c'], ['bs', '#00a47c'], ['bo', '#ffffff']],
        [['drl', '#9cb4bc', '#00ff00'], ['ldi', '#9cb4bc'], ['rout', '#dcdcdc']],
        ['cvia', 'tp', 'bp', 'gd1', 'outline', 'panel', 'ydkdrl', 'd', 'to.d', 'ts.d', 'cs.d', 'sig2t.d', 'sig3b.d', 'ss.d', 'bs.d', 'drl.d', 'rout.d', 'gd1.d', 'outline.d', 'panel.d', 'tp.d', '01', '0'].map(n => [n, '#9bdcdc'])
    ];
    document.getElementById('layers').innerHTML =
        '<div class="border-t border-l border-black pt-px pl-px pb-[7px] bg-[#55d0b0]">' +
        groups.map(rows => '<div class="bg-black pt-[2px] pb-[2px] pl-[2px] mb-[3px] flex flex-col gap-[2px]">' +
            rows.map(([name, bg, dot]) =>
                '<label class="flex h-[14px]">' +
                '<input type="checkbox" class="appearance-none m-[2px] size-[10px] shrink-0 bg-white border-2 ' +
                (name === 'drl' ? 'border-[#0000a0] outline-2 outline-[#0000a0]' : 'border-black outline-2 outline-white') + '">' +
                '<i class="ml-[2px] mr-[2px] size-[14px] shrink-0 rounded-full" style="background:' + (dot || 'transparent') + '"></i>' +
                '<span class="flex-1 overflow-hidden pl-[1px]" style="background:' + bg + '">' + name + '</span></label>').join('') +
            '</div>').join('') + '</div>';
</script>
</body>
</html>
